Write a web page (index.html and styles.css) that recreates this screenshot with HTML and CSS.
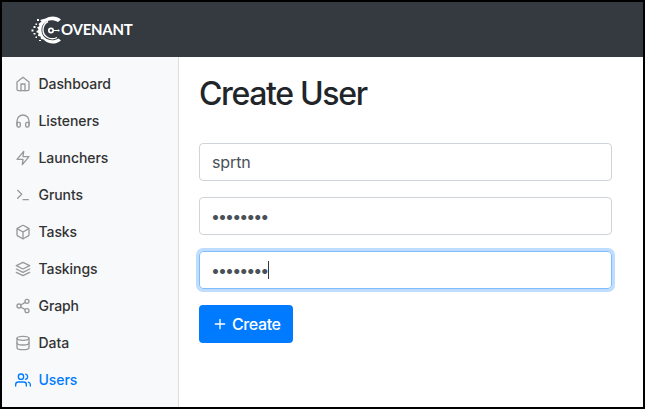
FILE: index.html
```html
<!DOCTYPE html>
<html lang="en">
<head>
<meta charset="utf-8">
<title>Covenant</title>
<link rel="stylesheet" href="styles.css">
</head>
<body>
<div class="window">
  <header class="topbar">
    <svg class="mark" viewBox="0 0 33 30" aria-hidden="true">
      <path d="M31 4.500C27 .8 20 .5 15.500 3.500L10 5l1.500 1.500L8.500 9l1 2-2.500 1.500 1.500 2L6 17l2.500 1L8 21l2.500.5L11 24l2.500.5C18 29.500 26 30 31 25.500L28.500 23.500C21 28 11.500 23.500 11.500 15C11.500 6.500 20.500 2.500 28 7Z" fill="#fff"/>
      <path d="M27 22.500C20.500 26 13 21.500 13 15c0-4 2-7 5-8.500" fill="none" stroke="#fff" stroke-width="1.400"/>
      <path d="M7 4h2v2H7zM3.500 11h2v2h-2zM1.500 14.500h2v2h-2zM5.500 8.500h1.500v1.500H5.500zM3.500 18h2v1.500h-2zM5.500 21.500h1.500v1.500H5.500zM9 25h2v1H9z" fill="#fff"/>
      <circle cx="21" cy="15.500" r="2.200" fill="none" stroke="#fff" stroke-width="1.700"/>
      <path d="M23 15.500h6" stroke="#fff"/>
      <circle cx="28.500" cy="15.500" r="1.100" fill="#fff"/>
    </svg>
    <span class="wordmark">OVENANT</span>
  </header>
  <div class="layout">
    <nav class="sidebar">
      <a class="item"><svg class="icon" viewBox="0 0 24 24"><path d="M3 9l9-7 9 7v11a2 2 0 0 1-2 2H5a2 2 0 0 1-2-2z"/><path d="M9 22V12h6v10"/></svg><span>Dashboard</span></a>
      <a class="item"><svg class="icon" viewBox="0 0 24 24"><path d="M3 18v-6a9 9 0 0 1 18 0v6"/><path d="M21 19a2 2 0 0 1-2 2h-1a2 2 0 0 1-2-2v-3a2 2 0 0 1 2-2h3zM3 19a2 2 0 0 0 2 2h1a2 2 0 0 0 2-2v-3a2 2 0 0 0-2-2H3z"/></svg><span>Listeners</span></a>
      <a class="item"><svg class="icon" viewBox="0 0 24 24"><path d="M13 2L3 14h9l-1 8 10-12h-9z"/></svg><span>Launchers</span></a>
      <a class="item"><svg class="icon" viewBox="0 0 24 24"><path d="M4 17l6-6-6-6M12 19h8"/></svg><span>Grunts</span></a>
      <a class="item"><svg class="icon" viewBox="0 0 24 24"><path d="M21 16V8a2 2 0 0 0-1-1.730l-7-4a2 2 0 0 0-2 0l-7 4A2 2 0 0 0 3 8v8a2 2 0 0 0 1 1.730l7 4a2 2 0 0 0 2 0l7-4A2 2 0 0 0 21 16z"/><path d="M3.270 6.960L12 12.010l8.730-5.050M12 22.080V12"/></svg><span>Tasks</span></a>
      <a class="item"><svg class="icon" viewBox="0 0 24 24"><path d="M12 2L2 7l10 5 10-5zM2 17l10 5 10-5M2 12l10 5 10-5"/></svg><span>Taskings</span></a>
      <a class="item"><svg class="icon" viewBox="0 0 24 24"><circle cx="18" cy="5" r="3"/><circle cx="6" cy="12" r="3"/><circle cx="18" cy="19" r="3"/><path d="M8.590 13.510l6.830 3.980M15.410 6.510l-6.820 3.980"/></svg><span>Graph</span></a>
      <a class="item"><svg class="icon" viewBox="0 0 24 24"><ellipse cx="12" cy="5" rx="9" ry="3"/><path d="M21 12c0 1.660-4 3-9 3s-9-1.340-9-3"/><path d="M3 5v14c0 1.660 4 3 9 3s9-1.340 9-3V5"/></svg><span>Data</span></a>
      <a class="item active"><svg class="icon" viewBox="0 0 24 24"><path d="M17 21v-2a4 4 0 0 0-4-4H5a4 4 0 0 0-4 4v2"/><circle cx="9" cy="7" r="4"/><path d="M23 21v-2a4 4 0 0 0-3-3.870M16 3.130a4 4 0 0 1 0 7.750"/></svg><span>Users</span></a>
    </nav>
    <main class="content">
      <h1>Create User</h1>
      <div class="field">sprtn</div>
      <div class="field"><span class="dots">••••••••</span></div>
      <div class="field focused"><span class="dots">••••••••</span><span class="caret"></span></div>
      <button class="create"><svg class="icon" viewBox="0 0 24 24"><path d="M12 5v14M5 12h14"/></svg><span>Create</span></button>
    </main>
  </div>
</div>
</body>
</html>
```
FILE: styles.css
```css
* { box-sizing: border-box; }
body {
  margin: 0;
  font-family: Inter, "Liberation Sans", sans-serif;
  color: #212529;
}
.window {
  height: 409px;
  border: 2px solid #000;
  background: #fff;
  display: flex;
  flex-direction: column;
  overflow: hidden;
}
.topbar {
  height: 55px;
  flex: none;
  background: #343a40;
  display: flex;
  align-items: center;
  padding-left: 28px;
}
.mark { width: 33px; height: 30px; }
.wordmark {
  color: #fff;
  font-family: Lato, sans-serif;
  font-weight: 700;
  font-size: 15px;
  line-height: 20px;
  letter-spacing: -0.25px;
  margin: -1px 0 0 -2px;
}
.layout { flex: 1; display: flex; }
.sidebar {
  width: 177px;
  flex: none;
  background: #f8f9fb;
  border-right: 1px solid #dcdddf;
  padding-top: 8px;
}
.item {
  display: flex;
  align-items: center;
  height: 37px;
  padding-left: 13px;
  gap: 7.500px;
  font-size: 14px;
  font-weight: 500;
  letter-spacing: -0.08px;
  color: #333;
}
.icon {
  width: 16px;
  height: 16px;
  fill: none;
  stroke: #999;
  stroke-width: 2;
  stroke-linecap: round;
  stroke-linejoin: round;
}
.active { color: #007bff; }
.active .icon { stroke: currentColor; }
.content { flex: 1; padding: 18px 31px 0 20px; }
h1 {
  margin: 0 0 30px;
  font-size: 32px;
  line-height: 38px;
  font-weight: 500;
  letter-spacing: -1.350px;
}
.field {
  height: 38px;
  margin-bottom: 16px;
  padding: 0 12px;
  border: 1px solid #ced4da;
  border-radius: 4px;
  display: flex;
  align-items: center;
  font-size: 16px;
  letter-spacing: -0.1px;
  color: #495057;
}
.focused {
  border-color: #80bdff;
  box-shadow: 0 0 0 3px #bfdeff;
}
.dots { font-size: 16px; letter-spacing: -1.950px; margin-left: -1px; }
.caret { width: 1px; height: 18px; margin-left: 1px; background: #343a40; }
.create {
  height: 38px;
  width: 94px;
  padding: 0 0 0 13px;
  border: 0;
  border-radius: 4px;
  background: #007bff;
  color: #fff;
  font: 500 16px Inter, sans-serif;
  letter-spacing: -0.4px;
  display: flex;
  align-items: center;
  gap: 4px;
}
.create .icon { stroke: #fff; }
```
